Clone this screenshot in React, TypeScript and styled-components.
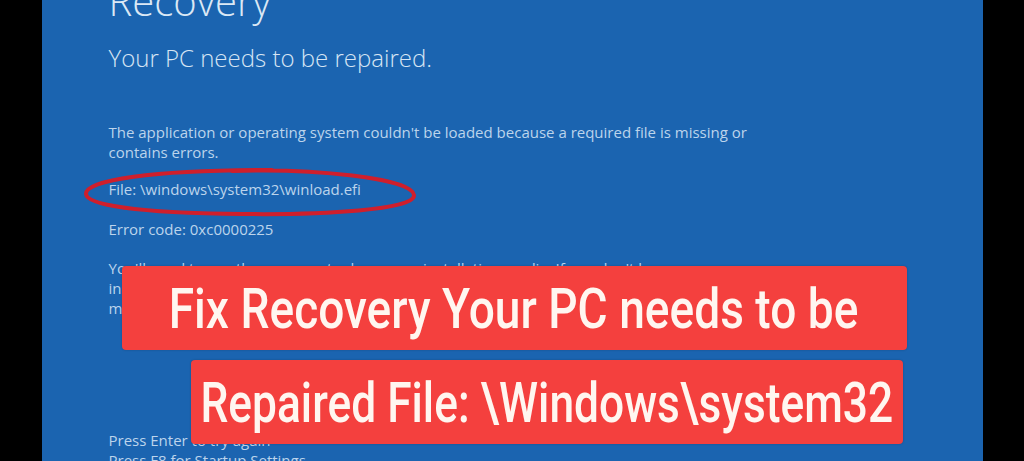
import styled, { createGlobalStyle } from "styled-components";

const GlobalStyle = createGlobalStyle`
  html, body {
    margin: 0;
    padding: 0;
    background: #000;
    overflow: hidden;
  }
`;

const Page = styled.div`
  width: 1024px;
  height: 461px;
  display: flex;
  justify-content: center;
  background: #000;
`;

const Screen = styled.main`
  position: relative;
  width: 941px;
  height: 461px;
  overflow: hidden;
  background: #1b64b0;
  color: #d3e3f3;
  font-family: "Open Sans", "Noto Sans", sans-serif;
`;

const Content = styled.div`
  display: flex;
  flex-direction: column;
  padding-left: 67px;
  margin-top: -23px;
`;

const Title = styled.h1`
  margin: 0;
  font-size: 40px;
  font-weight: 300;
  line-height: 48px;
  color: #dbe8f5;
`;

const Subtitle = styled.h2`
  margin: 18px 0 0;
  font-size: 24px;
  font-weight: 300;
  line-height: 30px;
  color: #d6e5f4;
`;

const Para = styled.p<{ $gap: number }>`
  margin: ${(p) => p.$gap}px 0 0;
  font-size: 15px;
  line-height: 20px;
  color: #bcd4ec;
`;

const Ring = styled.svg`
  position: absolute;
  left: 40px;
  top: 164px;
`;

const Overlay = styled.div`
  position: absolute;
  left: 80px;
  top: 266px;
  display: flex;
  flex-direction: column;
  gap: 10px;
`;

const Banner = styled.div<{ $w: number; $indent: number }>`
  width: ${(p) => p.$w}px;
  height: 84px;
  margin-left: ${(p) => p.$indent}px;
  display: flex;
  align-items: center;
  justify-content: center;
  background: #f4403e;
  border-radius: 4px;
  box-shadow: 0 0 2px rgba(0, 0, 0, 0.25);
`;

const BannerText = styled.span<{ $scale: number }>`
  display: block;
  white-space: nowrap;
  font-family: Roboto, "Liberation Sans", sans-serif;
  font-weight: 500;
  font-size: 55px;
  line-height: 1;
  color: #fff6f0;
  margin-top: 2px;
  transform: scaleX(${(p) => p.$scale});
  transform-origin: center;
`;

export default function App() {
  return (
    <>
      <GlobalStyle />
      <Page>
        <Screen>
          <Content>
            <Title>Recovery</Title>
            <Subtitle>Your PC needs to be repaired.</Subtitle>
            <Para $gap={49}>
              The application or operating system couldn't be loaded because a required file is missing or
              <br />
              contains errors.
            </Para>
            <Para $gap={17}>File: \windows\system32\winload.efi</Para>
            <Para $gap={20}>Error code: 0xc0000225</Para>
            <Para $gap={19}>
              You'll need to use the recovery tools on your installation media. If you don't have any
              <br />
              installation media (like a disc or USB device), contact your system administrator or PC
              <br />
              manufacturer.
            </Para>
            <Para $gap={112}>
              Press Enter to try again
              <br />
              Press F8 for Startup Settings
            </Para>
          </Content>

          <Ring width="340" height="56" viewBox="0 0 340 56">
            <path
              d="M150 7 C 230 4, 330 14, 332 31 C 334 46, 240 51, 160 50 C 80 49, 5 44, 4 30 C 3 16, 70 6, 190 6"
              fill="none"
              stroke="#cf1f2c"
              strokeWidth="4"
              strokeLinecap="round"
            />
          </Ring>

          <Overlay>
            <Banner $w={785} $indent={0}>
              <BannerText $scale={0.838}>Fix Recovery Your PC needs to be</BannerText>
            </Banner>
            <Banner $w={712} $indent={69}>
              <BannerText $scale={0.806}>Repaired File: \Windows\system32</BannerText>
            </Banner>
          </Overlay>
        </Screen>
      </Page>
    </>
  );
}
